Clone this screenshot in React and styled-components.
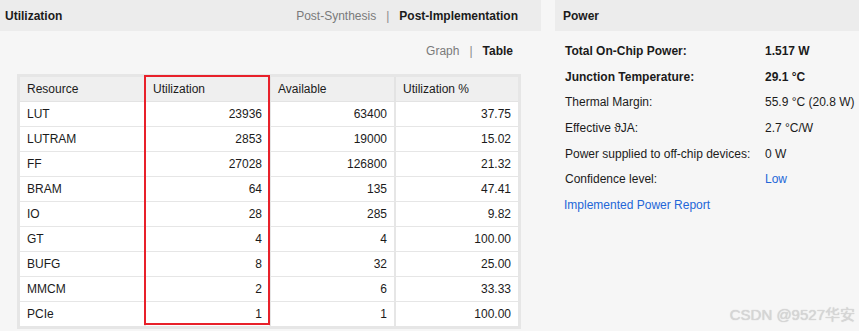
import React from "react";
import styled, { createGlobalStyle } from "styled-components";

const Global = createGlobalStyle`
  html, body { margin: 0; padding: 0; }
  body {
    background: #f6f6f6;
    font-family: "Liberation Sans", Arial, sans-serif;
    font-size: 12px;
    color: #1b1b1b;
    width: 859px;
    height: 331px;
    overflow: hidden;
  }
`;

const Page = styled.div`
  position: relative;
  display: flex;
  gap: 14px;
  width: 859px;
  height: 331px;
  background: #f6f6f6;
`;

const Panel = styled.section`
  display: flex;
  flex-direction: column;
  width: ${(p) => p.$width || "auto"};
  flex: ${(p) => (p.$width ? "none" : "1")};
`;

const PanelHeader = styled.header`
  height: 31px;
  background: #ececec;
  display: flex;
  align-items: center;
  padding: 0 ${(p) => p.$padRight || 0}px 0 ${(p) => p.$padLeft || 5}px;
`;

const Title = styled.h2`
  margin: 0;
  font-size: 12px;
  font-weight: bold;
  color: #1b1b1b;
  flex: 1;
`;

const Switch = styled.div`
  display: flex;
  align-items: center;
  gap: 10px;
  font-size: 12px;
`;

const SwitchItem = styled.span`
  color: ${(p) => (p.$active ? "#1b1b1b" : "#7a7a7a")};
  font-weight: ${(p) => (p.$active ? "bold" : "normal")};
`;

const Sep = styled.span`
  color: #8a8a8a;
`;

const UtilBody = styled.div`
  display: flex;
  flex-direction: column;
  padding: 12px 20px 0 17px;
  gap: 16px;
`;

const ViewSwitch = styled(Switch)`
  justify-content: flex-end;
  height: 15px;
  padding-right: 8px;
`;

const TableWrap = styled.div`
  position: relative;
  width: 504px;
  border: 3px solid #e6e6e6;
  box-sizing: border-box;
  background: #fff;
`;

const Table = styled.table`
  border-collapse: collapse;
  width: 100%;
  table-layout: fixed;
`;

const Th = styled.th`
  height: 24px;
  padding: 0 7px;
  background: #efefef;
  font-weight: normal;
  text-align: left;
  color: #1b1b1b;
  border-left: 2px solid #e3e3e3;
  border-bottom: 1px solid #e3e3e3;
  &:first-child { border-left: none; }
`;

const Td = styled.td`
  height: 24px;
  padding: 0 7px;
  text-align: ${(p) => (p.$num ? "right" : "left")};
  border-left: 2px solid #e6e6e6;
  border-bottom: 1px solid #e6e6e6;
  &:first-child { border-left: none; }
  tr:last-child & { border-bottom: none; }
`;

const Highlight = styled.div`
  position: absolute;
  left: 124px;
  top: -2px;
  width: 126px;
  bottom: 1px;
  border: 2px solid #e8202a;
  box-sizing: border-box;
  pointer-events: none;
`;

const PowerBody = styled.div`
  display: grid;
  grid-template-columns: 200px 1fr;
  grid-auto-rows: 25.7px;
  align-items: center;
  padding: 7px 0 0 10px;
`;

const Label = styled.div`
  font-weight: ${(p) => (p.$bold ? "bold" : "normal")};
  white-space: nowrap;
`;

const Value = styled.div`
  font-weight: ${(p) => (p.$bold ? "bold" : "normal")};
  color: ${(p) => (p.$link ? "#2366d8" : "#1b1b1b")};
  white-space: nowrap;
`;

const ReportLink = styled.a`
  grid-column: 1 / -1;
  color: #2366d8;
  text-decoration: none;
  margin-left: -1px;
`;

const Watermark = styled.div`
  position: absolute;
  right: 4px;
  bottom: 7px;
  font-size: 15px;
  color: #d6d6d6;
  text-shadow: 0 0 1px #c4c4c4;
  font-family: "Liberation Sans", "Noto Sans CJK SC", sans-serif;
`;

const rows = [
  ["LUT", "23936", "63400", "37.75"],
  ["LUTRAM", "2853", "19000", "15.02"],
  ["FF", "27028", "126800", "21.32"],
  ["BRAM", "64", "135", "47.41"],
  ["IO", "28", "285", "9.82"],
  ["GT", "4", "4", "100.00"],
  ["BUFG", "8", "32", "25.00"],
  ["MMCM", "2", "6", "33.33"],
  ["PCIe", "1", "1", "100.00"],
];

const power = [
  ["Total On-Chip Power:", "1.517 W", true],
  ["Junction Temperature:", "29.1 °C", true],
  ["Thermal Margin:", "55.9 °C (20.8 W)"],
  ["Effective \u03d1JA:", "2.7 °C/W"],
  ["Power supplied to off-chip devices:", "0 W"],
  ["Confidence level:", "Low", false, true],
];

export default function App() {
  return (
    <Page>
      <Global />
      <Panel $width="541px">
        <PanelHeader $padLeft={5} $padRight={23}>
          <Title>Utilization</Title>
          <Switch>
            <SwitchItem>Post-Synthesis</SwitchItem>
            <Sep>|</Sep>
            <SwitchItem $active>Post-Implementation</SwitchItem>
          </Switch>
        </PanelHeader>
        <UtilBody>
          <ViewSwitch>
            <SwitchItem>Graph</SwitchItem>
            <Sep>|</Sep>
            <SwitchItem $active>Table</SwitchItem>
          </ViewSwitch>
          <TableWrap>
            <Table>
              <colgroup>
                <col style={{ width: "125px" }} />
                <col style={{ width: "125px" }} />
                <col style={{ width: "125px" }} />
                <col />
              </colgroup>
              <thead>
                <tr>
                  <Th>Resource</Th>
                  <Th>Utilization</Th>
                  <Th>Available</Th>
                  <Th>Utilization %</Th>
                </tr>
              </thead>
              <tbody>
                {rows.map((r) => (
                  <tr key={r[0]}>
                    <Td>{r[0]}</Td>
                    <Td $num>{r[1]}</Td>
                    <Td $num>{r[2]}</Td>
                    <Td $num>{r[3]}</Td>
                  </tr>
                ))}
              </tbody>
            </Table>
            <Highlight />
          </TableWrap>
        </UtilBody>
      </Panel>
      <Panel>
        <PanelHeader $padLeft={8}>
          <Title>Power</Title>
        </PanelHeader>
        <PowerBody>
          {power.map(([l, v, b, link]) => (
            <React.Fragment key={l}>
              <Label $bold={b}>{l}</Label>
              <Value $bold={b} $link={link}>{v}</Value>
            </React.Fragment>
          ))}
          <ReportLink href="#">Implemented Power Report</ReportLink>
        </PowerBody>
      </Panel>
      <Watermark>CSDN @9527华安</Watermark>
    </Page>
  );
}
